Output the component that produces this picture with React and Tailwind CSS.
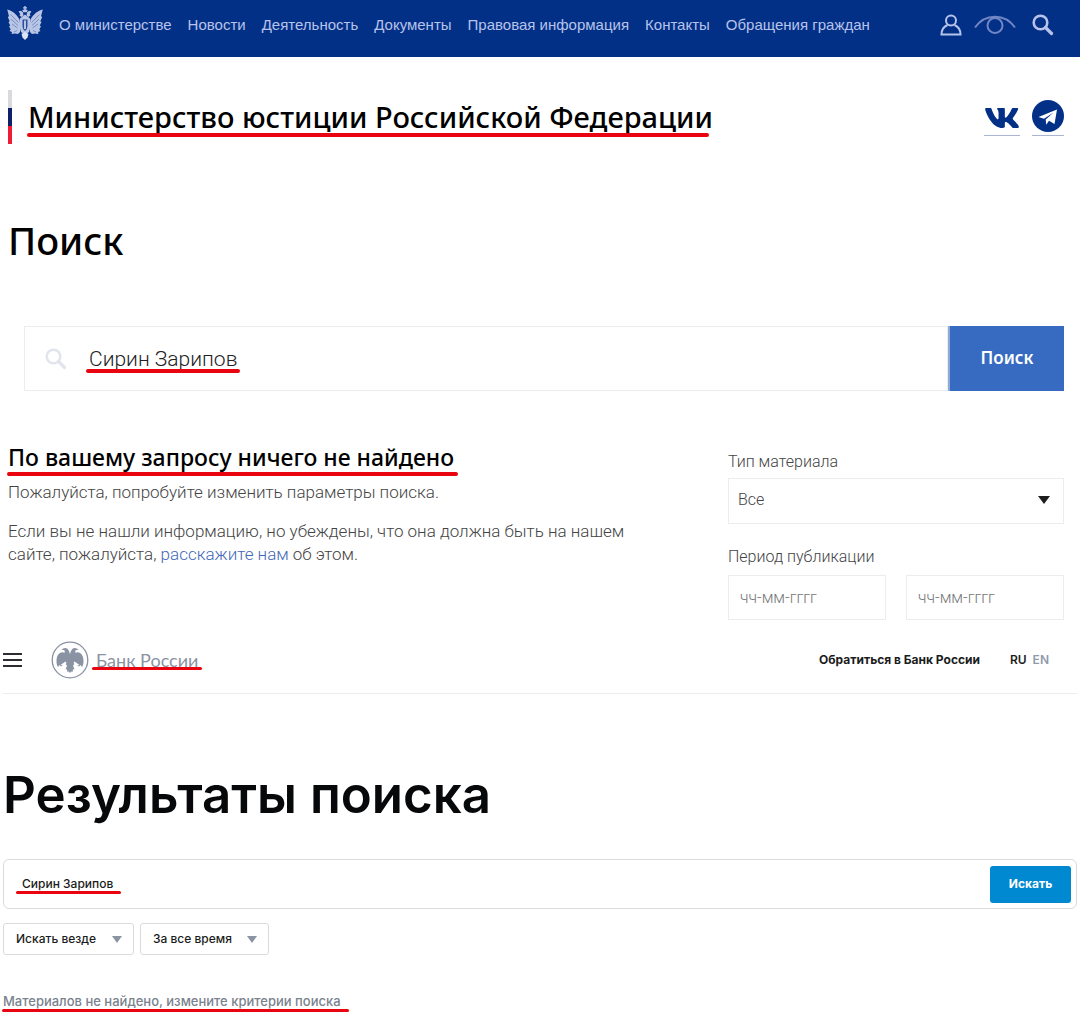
import React, { useState } from "react";
import { FaVk } from "react-icons/fa";

const navLinks = [
  "О министерстве",
  "Новости",
  "Деятельность",
  "Документы",
  "Правовая информация",
  "Контакты",
  "Обращения граждан",
];

const Emblem = () => (
  <svg viewBox="0 0 36 34" className="w-9 h-[34px]" fill="#b9c5e4">
    <path d="M17.3 0h1.4v1.2H20v1.2h-1.300V3.500l2 .5-.8 2.300h-3.800L15.300 4l2-.5V2.400H16V1.200h1.300z" />
    <path d="M11.500 5.500l2.500-.8 2 1.800.5 3-2 1.500-2-1.500.8-1.500zM24.500 5.500L22 4.700l-2 1.800-.5 3 2 1.500 2-1.500-.8-1.500z" />
    <path d="M.2 3.500C5 4.500 9.500 8 12.500 13.500l1 6.500-.5 6-2 2-3-.5-3.500.5.500-2-2.500-1 1.200-1.800L2 20.500l1.200-1L1.500 16l1.200-.8L.8 11l1.200-.8z" />
    <path d="M35.800 3.500C31 4.500 26.500 8 23.500 13.500l-1 6.500.5 6 2 2 3-.5 3.500.5-.5-2 2.500-1-1.200-1.800 1.700-2.700-1.200-1 1.700-3.500-1.200-.8 1.900-4.200-1.200-.8z" />
    <path d="M18 8.500l5 4 1 6.500-2 7-4 3-4-3-2-7 1-6.500z" />
    <path d="M18 26l3.500 2-1 3.500L18 34l-2.500-2.500-1-3.500z" fill="#dde4f5" />
    <path d="M3.500 8.500l8 8M4 13l7 6.500M5 18l5.500 4M32.500 8.500l-8 8M32 13l-7 6.500M31 18l-5.500 4M7 26l3-1.500M29 26l-3-1.500" stroke="#6a80bb" strokeWidth="0.800" />
    <path d="M15.500 13.500h5V20q0 3.500-2.500 5-2.500-1.500-2.500-5z" fill="#29509c" />
    <path d="M17.200 14.500h1.600V23h-1.600z" fill="#dde4f5" />
  </svg>
);

const UserIcon = () => (
  <svg viewBox="0 0 22 22" className="w-[22px] h-[22px]" fill="none" stroke="#b7c3ea" strokeWidth="2">
    <circle cx="11" cy="6.500" r="5" />
    <path d="M7.500 11C4 12.500 1.500 15.500 1.500 20.500h19c0-5-2.500-8-6-9.500" />
  </svg>
);

const EyeIcon = () => (
  <svg viewBox="0 0 42 20" className="w-[42px] h-5" fill="none" stroke="#7186c4">
    <path d="M1 12.500C11-2 31-2 41 12.500" strokeWidth="2" />
    <circle cx="21" cy="10.500" r="7.500" strokeWidth="2" />
  </svg>
);

const SearchIcon = ({ className }) => (
  <svg viewBox="0 0 22 22" className={className} fill="none" stroke="currentColor">
    <circle cx="8.500" cy="8.500" r="6.800" strokeWidth="2.600" />
    <path d="M13.500 13.500l6 6" strokeWidth="3.200" strokeLinecap="round" />
  </svg>
);

const TelegramIcon = () => (
  <svg viewBox="0 0 32 32" className="w-8 h-8">
    <circle cx="16" cy="16" r="16" fill="#033087" />
    <path d="M6.500 17L25 9.500 22.500 24l-5.500-3.200-2.800 4-.5-5.300L21.500 12.500 12 18.800z" fill="#fff" />
  </svg>
);

const BankLogo = () => (
  <svg viewBox="0 0 38 38" className="w-[38px] h-[38px]" fill="#8a93a3">
    <circle cx="19" cy="19" r="17.800" fill="none" stroke="#8a93a3" strokeWidth="1.300" />
    <path d="M19 13.500c-.5-3-1.800-6.500-4.800-6.500-1.600 0-2.400.8-3.700 1.800l3 .5.3 2.500C9 9.500 5.500 14 5.500 20c0 2.500.4 4.500 1.500 6l1.500-2 1.500 1.500 4-3 2 2-1.500 4 1.500-.3.500 2.800 1.500-.5 1 1.800 1-1.800 1.500.5.500-2.800 1.500.3-1.500-4 2-2 4 3 1.500-1.500L31 26c1.100-1.500 1.500-3.500 1.500-6 0-6-3.500-10.500-8.300-8.200l.3-2.500 3-.5C26.200 7.800 25.400 7 23.800 7c-3 0-4.300 3.500-4.800 6.500z" />
    <path d="M14.500 20.500L9.500 24l3.500.5 2.500-2.500zM23.500 20.500l5 3.500-3.500.5-2.500-2.500z" fill="#fff" />
  </svg>
);

// red pen line drawn under the highlighted phrases
const Marked = ({ children, line }) => (
  <span className="relative inline-block">
    {children}
    <span className={`absolute rounded-full bg-[#ea0410] ${line}`} />
  </span>
);

const MinistrySearch = () => {
  const [query, setQuery] = useState("Сирин Зарипов");

  return (
    <section className="font-['Roboto',sans-serif]">
      <header className="flex items-start justify-between h-[57px] pl-[7px] pr-[26px] bg-[#033087]">
        <div className="flex items-start">
          <a href="#" aria-label="Главная" className="pt-[6px]">
            <Emblem />
          </a>
          <nav className="flex gap-4 pl-4 pt-[13px] font-['Liberation_Sans',Arial,sans-serif] text-[15px] leading-6 text-[#b7c3ea] whitespace-nowrap">
            {navLinks.map((link) => (
              <a key={link} href="#">{link}</a>
            ))}
          </nav>
        </div>
        <div className="flex items-center gap-3 pt-[14px] text-[#b7c3ea]">
          <a href="#" aria-label="Личный кабинет"><UserIcon /></a>
          <a href="#" aria-label="Версия для слабовидящих"><EyeIcon /></a>
          <button type="button" aria-label="Найти" className="pl-1">
            <SearchIcon className="w-[22px] h-[22px]" />
          </button>
        </div>
      </header>

      <div className="flex items-start justify-between pl-2 pr-4 pt-[33px]">
        <div className="flex items-center gap-4">
          <div className="flex flex-col w-1 h-[54px]">
            <div className="flex-1 bg-[#d9dadd]" />
            <div className="flex-1 bg-[#0d2068]" />
            <div className="flex-1 bg-[#ee1c34]" />
          </div>
          <Marked line="-left-px right-1 top-[38px] h-1">
            <span className="font-['Noto_Sans',sans-serif] text-[29px] leading-[44px] font-medium text-black whitespace-nowrap">
              Министерство юстиции Российской Федерации
            </span>
          </Marked>
        </div>
        <div className="flex gap-3 pt-[10px]">
          <a href="#" aria-label="ВКонтакте" className="flex items-center h-9 border-b border-[#a9b5d3] text-[#033087]">
            <FaVk className="w-9 h-9" />
          </a>
          <a href="#" aria-label="Telegram" className="h-9 border-b border-[#a9b5d3]">
            <TelegramIcon />
          </a>
        </div>
      </div>

      <h1 className="pl-2 pt-[68px] font-['Noto_Sans',sans-serif] text-[38px] leading-[56px] font-medium text-black">Поиск</h1>

      <form className="flex h-[65px] ml-6 mr-4 mt-[58px]" onSubmit={(e) => e.preventDefault()}>
        <label className="relative flex flex-1 items-center border border-[#ececee] pl-5 gap-[22px]">
          <SearchIcon className="w-[22px] h-[22px] text-[#e2e4ee]" />
          <input
            type="text"
            aria-label="Поисковый запрос"
            value={query}
            onChange={(e) => setQuery(e.target.value)}
            className="flex-1 font-light text-[21px] leading-8 text-[#222] outline-none"
          />
          <span className="absolute left-[61px] top-[42px] w-[154px] h-1 rounded-full bg-[#ea0410]" />
        </label>
        <button type="submit" className="w-[116px] pb-px border-l-2 border-[#8fa9d8] bg-[#376bc1] font-['Noto_Sans',sans-serif] text-[17px] font-semibold text-white">
          Поиск
        </button>
      </form>

      <div className="flex justify-between pl-2 pr-4 pt-[50px]">
        <div className="w-[640px] text-[17px] leading-[23px] font-light text-[#444]">
          <h2 className="font-['Noto_Sans',sans-serif] text-[23px] leading-8 font-medium text-black whitespace-nowrap">
            <Marked line="-left-px -right-1 top-[31px] h-1">По вашему запросу ничего не найдено</Marked>
          </h2>
          <p className="pt-2">Пожалуйста, попробуйте изменить параметры поиска.</p>
          <p className="pt-4">
            Если вы не нашли информацию, но убеждены, что она должна быть на нашем сайте, пожалуйста,{" "}
            <a href="#" className="text-[#3f68b5]">расскажите нам</a> об этом.
          </p>
        </div>

        <div className="w-[336px] text-base leading-6 font-light text-[#444] pt-[9px]">
          <label htmlFor="material" className="block">Тип материала</label>
          <div className="relative mt-1">
            <select id="material" className="w-full h-[46px] pl-[9px] pb-[3px] border border-[#ececee] bg-white appearance-none">
              <option>Все</option>
            </select>
            <svg viewBox="0 0 12 8" className="absolute right-[14px] top-[18px] w-3 h-2 pointer-events-none" fill="#1d1d1f">
              <path d="M0 0h12L6 8z" />
            </svg>
          </div>
          <label htmlFor="dateFrom" className="block mt-[21px]">Период публикации</label>
          <div className="flex gap-5 mt-[6px]">
            <input id="dateFrom" type="text" placeholder="чч-мм-гггг" className="min-w-0 flex-1 h-[45px] px-[11px] border border-[#ececee] placeholder:text-[#777]" />
            <input type="text" aria-label="Конец периода" placeholder="чч-мм-гггг" className="min-w-0 flex-1 h-[45px] px-[11px] border border-[#ececee] placeholder:text-[#777]" />
          </div>
        </div>
      </div>
    </section>
  );
};

const FilterSelect = ({ label, option, width }) => (
  <div className={`relative ${width}`}>
    <select aria-label={label} className="w-full h-8 pl-3 border border-[#d9dbde] rounded-[3px] bg-white text-xs font-medium appearance-none">
      <option>{option}</option>
    </select>
    <svg viewBox="0 0 10 7" className="absolute right-3 top-[13px] w-[10px] h-[7px] pointer-events-none" fill="#8a94a3">
      <path d="M0 0h10L5 7z" />
    </svg>
  </div>
);

const BankSearch = () => {
  const [query, setQuery] = useState("Сирин Зарипов");

  return (
    <section className="px-[3px] pt-5 pb-1 font-['Inter',sans-serif] text-[13px] leading-5 text-[#1a1c20]">
      <header className="flex items-center justify-between h-[54px] pb-[14px] pr-7 border-b border-[#ececee]">
        <div className="flex items-center">
          <button type="button" aria-label="Меню" className="flex flex-col gap-1 w-[19px]">
            <span className="h-[2px] bg-[#2b2d33]" />
            <span className="h-[2px] bg-[#2b2d33]" />
            <span className="h-[2px] bg-[#2b2d33]" />
          </button>
          <a href="#" className="flex items-center gap-[7px] pl-[29px] font-['Lato',sans-serif] text-lg leading-6 text-[#8a93a3]">
            <BankLogo />
            <Marked line="-left-1 -right-1 top-[19px] h-[3px]">Банк России</Marked>
          </a>
        </div>
        <div className="flex items-center text-xs font-semibold">
          <a href="#" className="font-bold">Обратиться в Банк России</a>
          <button type="button" className="ml-[30px]">RU</button>
          <button type="button" className="ml-[6px] text-[#8f9bab]">EN</button>
        </div>
      </header>

      <h1 className="pt-[69px] text-[51px] leading-[64px] font-semibold text-[#07080a]">Результаты поиска</h1>

      <form className="relative flex items-center h-[50px] mt-8 pl-[18px] pr-[5px] border border-[#d9dbde] rounded-md" onSubmit={(e) => e.preventDefault()}>
        <input
          type="text"
          aria-label="Искать на сайте"
          value={query}
          onChange={(e) => setQuery(e.target.value)}
          className="flex-1 text-xs font-medium outline-none"
        />
        <span className="absolute left-3 top-[31px] w-[105px] h-[3px] rounded-full bg-[#ea0410]" />
        <button type="submit" className="w-[81px] h-[37px] rounded-[3px] bg-[#0088d1] text-xs font-bold text-white">Искать</button>
      </form>

      <div className="flex gap-[6px] mt-[14px]">
        <FilterSelect label="Раздел" option="Искать везде" width="w-[131px]" />
        <FilterSelect label="Период" option="За все время" width="w-[129px]" />
      </div>

      <p className="mt-9 font-medium text-[#7a828e]">
        <Marked line="-left-px -right-2 top-[18px] h-[3px]">Материалов не найдено, измените критерии поиска</Marked>
      </p>
    </section>
  );
};

const App = () => (
  <main className="bg-white overflow-hidden">
    <MinistrySearch />
    <BankSearch />
  </main>
);

export default App;
